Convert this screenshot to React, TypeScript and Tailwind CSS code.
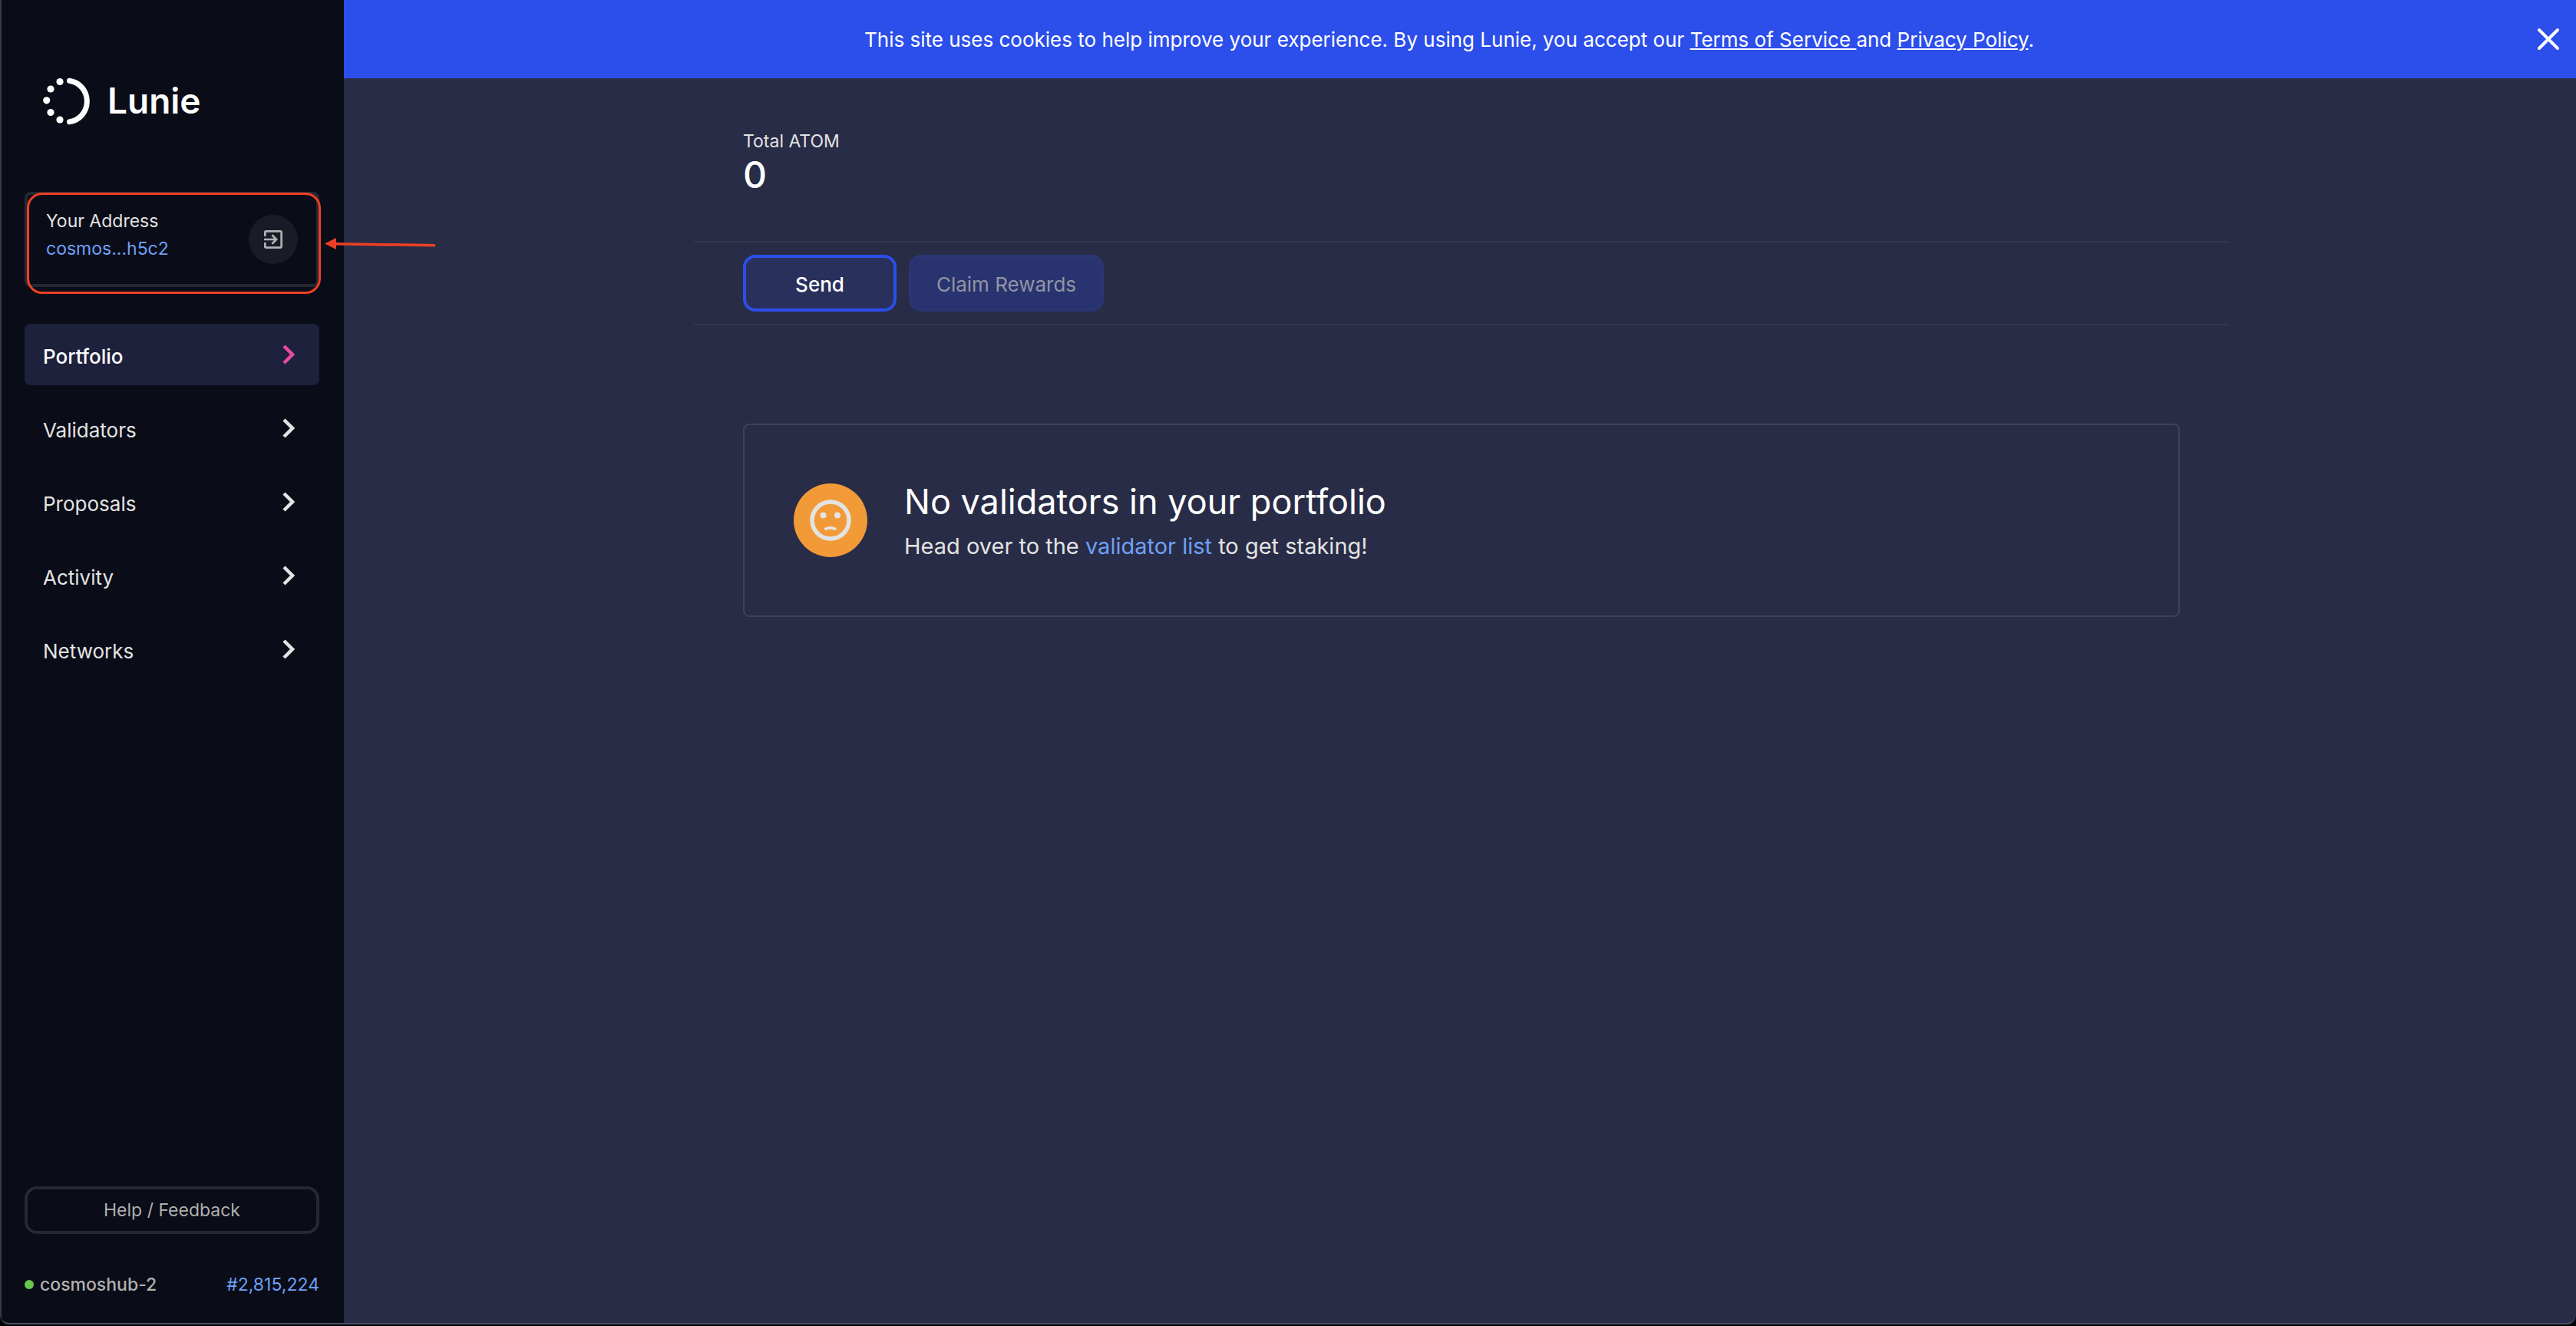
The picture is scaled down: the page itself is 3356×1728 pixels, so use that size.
import { MdExitToApp } from "react-icons/md";

const NAV = ["Portfolio", "Validators", "Proposals", "Activity", "Networks"];

function Logo() {
  return (
    <a href="#" className="flex items-start gap-5" aria-label="Lunie home">
      <svg width="64" height="62" viewBox="0 0 64 62" fill="white" aria-hidden="true">
        <path d="M34.5 4.200A26 27 0 0 1 34.5 57.800" fill="none" stroke="white" strokeWidth="7" strokeLinecap="round" />
        <circle cx="22" cy="5.500" r="4.600" />
        <circle cx="10" cy="15" r="4.600" />
        <circle cx="4.700" cy="29.800" r="4.600" />
        <circle cx="10" cy="45.500" r="4.600" />
        <circle cx="22" cy="55" r="4.600" />
      </svg>
      <span className="text-[46px] leading-[60px] font-semibold text-white">Lunie</span>
    </a>
  );
}

function Chevron() {
  return (
    <svg width="16" height="26" viewBox="0 0 16 26" fill="none" stroke="currentColor" strokeWidth="4.500" aria-hidden="true">
      <path d="M2 2L13 13L2 24" />
    </svg>
  );
}

function Sidebar() {
  return (
    <aside className="flex w-[448px] shrink-0 flex-col border-l-2 border-[#3a3b44] bg-[#0a0c17] pr-8 pb-8 pl-[30px]">
      <div className="pt-[101px] pl-6">
        <Logo />
      </div>

      <section className="relative mt-[87px] flex h-[124px] items-start justify-between rounded-lg border-4 border-[#262833] pt-4 pr-6 pl-6">
        <div>
          <h2 className="text-[23px] leading-9 text-[#e3e3e3]">Your Address</h2>
          <a href="#" className="block text-[23px] leading-9 text-[#6fa0f7]">cosmos...h5c2</a>
        </div>
        <button aria-label="Sign out" className="mt-2.5 flex size-16 items-center justify-center rounded-full bg-[#191b27] text-[#b3b3b3]">
          <MdExitToApp size={32} />
        </button>
        <div className="absolute -top-[3px] -left-px h-[132px] w-[383px] rounded-[20px] border-[3px] border-[#ee3f24]" />
        <svg className="absolute top-14 left-[387px]" width="146" height="18" viewBox="0 0 146 18" aria-hidden="true">
          <path d="M0 7.500L15 0V15Z" fill="#ee3f24" />
          <path d="M12 7.800L144 9.700" stroke="#ee3f24" strokeWidth="3.500" />
        </svg>
      </section>

      <nav className="mt-12 flex flex-col gap-4">
        {NAV.map((label, i) => (
          <a
            key={label}
            href="#"
            className={
              i === 0
                ? "flex h-20 items-center justify-between rounded-lg bg-[#1d213b] pt-1 pr-8 pl-6 text-[26px] font-medium text-white"
                : "flex h-20 items-center justify-between rounded-lg pt-1 pr-8 pl-6 text-[26px] text-[#e3e3e3]"
            }
          >
            <span>{label}</span>
            <span className={i === 0 ? "pb-1 text-[#e84aa0]" : "pb-1"}>
              <Chevron />
            </span>
          </a>
        ))}
      </nav>

      <button className="mt-auto h-[62px] rounded-2xl border-4 border-[#262833] text-[23px] text-[#b0b0b0]">Help / Feedback</button>
      <div className="mt-12 flex h-9 items-center justify-between text-[23px]">
        <span className="flex items-center gap-2 font-medium text-[#b0b0b0]">
          <span className="size-3 rounded-full bg-[#66c74e]" />
          cosmoshub-2
        </span>
        <a href="#" className="text-[#6fa0f7]">#2,815,224</a>
      </div>
    </aside>
  );
}

function CookieBanner() {
  return (
    <div className="flex h-[102px] items-center bg-[#2c4eea] pr-5 pl-6 text-[26px] text-white">
      <p className="flex-1 text-center">
        This site uses cookies to help improve your experience. By using Lunie, you accept our{" "}
        <a href="#" className="underline">Terms of Service </a>
        and <a href="#" className="underline">Privacy Policy</a>.
      </p>
      <button aria-label="Close" className="flex items-center">
        <svg width="32" height="32" viewBox="0 0 32 32" fill="none" stroke="white" strokeWidth="4" strokeLinecap="round" aria-hidden="true">
          <path d="M4 4L28 28M28 4L4 28" />
        </svg>
      </button>
    </div>
  );
}

function SadFace() {
  return (
    <div className="flex size-24 shrink-0 items-center justify-center rounded-full bg-[#f39a38]">
      <svg width="54" height="54" viewBox="0 0 54 54" aria-hidden="true">
        <circle cx="27" cy="27" r="24" fill="none" stroke="#e3e3e3" strokeWidth="5.500" />
        <circle cx="17.500" cy="20.500" r="4" fill="#e3e3e3" />
        <circle cx="36" cy="20.500" r="4" fill="#e3e3e3" />
        <path d="M19.500 38.800Q26.800 34.800 34 38.800" fill="none" stroke="#e3e3e3" strokeWidth="3.800" />
      </svg>
    </div>
  );
}

export default function App() {
  return (
    <div className="flex min-h-screen flex-col bg-black font-['Inter',sans-serif]">
      <div className="flex flex-1 overflow-hidden rounded-b-xl border-b-2 border-[#4b4f68] bg-[#282c46]">
        <Sidebar />
        <div className="flex min-w-0 flex-1 flex-col">
          <CookieBanner />
          <div className="pt-16 pl-1">
            <main className="mx-auto w-full max-w-[2000px]">
              <header className="h-[148px] px-16">
                <h3 className="text-[23px] leading-9 text-[#e3e3e3]">Total ATOM</h3>
                <h2 className="text-[48px] leading-[52px] font-medium text-white">0</h2>
              </header>
              <div className="flex gap-4 border-y-2 border-[#33374f] px-16 py-4">
                <button className="h-[74px] w-[200px] rounded-2xl border-4 border-[#2c4eea] bg-[#29305c] pt-0.5 text-[26px] font-medium text-white">Send</button>
                <button disabled className="h-[74px] w-[254px] rounded-2xl border-4 border-[#2a3673] bg-[#28336f] pt-0.5 text-[26px] text-[#9295a3]">Claim Rewards</button>
              </div>
              <section className="mx-16 mt-32 flex h-[252px] items-center gap-12 rounded-lg border-2 border-[#3d415a] px-16">
                <SadFace />
                <div className="pt-2">
                  <h2 className="text-[45px] leading-[60px] text-white">No validators in your portfolio</h2>
                  <p className="text-[29px] leading-[56px] text-[#e3e3e3]">
                    Head over to the <a href="#" className="text-[#6fa0f7]">validator list</a> to get staking!
                  </p>
                </div>
              </section>
            </main>
          </div>
        </div>
      </div>
      <div className="h-0.5 shrink-0" />
    </div>
  );
}
